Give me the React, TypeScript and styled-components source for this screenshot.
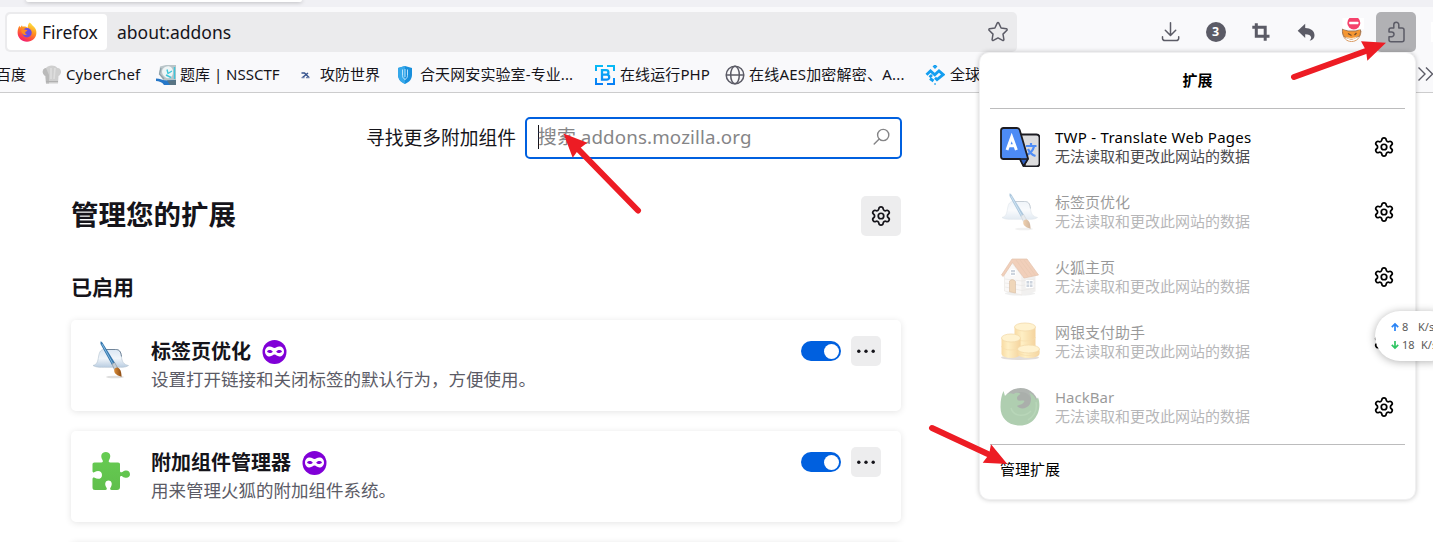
import React from 'react';
import styled, { createGlobalStyle } from 'styled-components';
import { Settings } from 'lucide-react';

const Global = createGlobalStyle`
  * { box-sizing: border-box; }
  body {
    margin: 0;
    overflow: hidden;
    background: #fff;
    color: #15141a;
    font-family: "Noto Sans", "Noto Sans CJK SC", sans-serif;
  }
  h1, h2, h3, p { margin: 0; }
  svg { display: block; flex: none; }
`;

const Window = styled.div`
  position: relative;
  width: 1433px;
  height: 542px;
  overflow: hidden;
  background: #fff;
`;

/* ---------- browser chrome ---------- */

const TabStrip = styled.div`
  height: 7px;
  padding-left: 26px;
  background: #f0f0f4;
`;
const ActiveTab = styled.div`
  width: 276px;
  height: 2px;
  background: #fff;
  border-radius: 0 0 4px 4px;
  box-shadow: 0 0 4px rgba(0, 0, 0, 0.4);
`;
const NavBar = styled.div`
  display: flex;
  height: 46px;
  padding: 5px 0 0 5px;
  background: #f9f9fb;
`;
const UrlBar = styled.div`
  display: flex;
  align-items: center;
  flex: none;
  width: 1012px;
  height: 40px;
  padding: 2px 8px 2px 2px;
  border-radius: 5px;
  background: #ebebed;
`;
const Identity = styled.div`
  display: flex;
  align-items: center;
  gap: 5.5px;
  width: 100px;
  height: 36px;
  padding-left: 9.5px;
  border-radius: 4px;
  background: #fff;
`;
const UrlText = styled.span`
  font-size: 17.5px;
  line-height: 24px;
  white-space: nowrap;
`;
const Address = styled.div`
  flex: 1;
  padding-left: 10px;
  display: flex;
`;
const Tools = styled.div`
  display: flex;
  flex: none;
  gap: 5.2px;
  margin-left: 133px;
`;
const ToolButton = styled.div<{ $active?: boolean }>`
  display: flex;
  align-items: center;
  justify-content: center;
  flex: none;
  width: 40px;
  height: 40px;
  padding-left: 1px;
  border-radius: 5px;
  background: ${(p) => (p.$active ? '#b1b1b4' : 'transparent')};
`;
const EdgeStub = styled.div`
  width: 3px;
  height: 20px;
  margin: 10px 0 0 15px;
  background: #fff;
`;
const BookmarksBar = styled.div`
  display: flex;
  align-items: center;
  height: 40px;
  background: #f9f9fb;
  border-bottom: 1px solid #cccccd;
`;
const Bookmark = styled.div<{ $width: number; $gap?: number; $track?: number }>`
  display: flex;
  align-items: center;
  flex: none;
  gap: ${(p) => p.$gap ?? 5}px;
  width: ${(p) => p.$width}px;
  height: 22px;
  padding-top: 2px;
  font-size: 15px;
  line-height: 22px;
  white-space: nowrap;
  letter-spacing: ${(p) => p.$track ?? 0}px;
  svg { margin-top: 2px; }
`;
const FirstBookmark = styled(Bookmark)`
  margin-left: -4px;
`;

/* ---------- add-ons page ---------- */

const Main = styled.main`
  width: 831px;
  margin-left: 71px;
  padding-top: 24px;
`;
const SearchRow = styled.div`
  display: flex;
  align-items: center;
  justify-content: flex-end;
  height: 42px;
`;
const SearchLabel = styled.span`
  margin-right: 9px;
  font-size: 18.75px;
  line-height: 28px;
`;
const SearchBox = styled.div`
  display: flex;
  align-items: center;
  width: 377px;
  height: 42px;
  padding: 0 10px 0 11px;
  border: 2px solid #0060df;
  border-radius: 5px;
  color: #858587;
  svg { margin-top: -3px; }
`;
const Caret = styled.i`
  width: 1px;
  height: 24px;
  margin-top: -2px;
  background: #15141a;
`;
const Placeholder = styled.span`
  flex: 1;
  margin: -2px 0 0 -1px;
  font-size: 18.75px;
  line-height: 28px;
  letter-spacing: 0.13px;
  white-space: pre;
`;
const HeadingRow = styled.div`
  display: flex;
  justify-content: space-between;
  height: 40px;
  margin: 37px 1px 0 0;
`;
const PageTitle = styled.h1`
  font-size: 27.5px;
  line-height: 37px;
  font-weight: 700;
`;
const SquareButton = styled.div<{ $size: number }>`
  display: flex;
  align-items: center;
  justify-content: center;
  flex: none;
  width: ${(p) => p.$size}px;
  height: ${(p) => p.$size}px;
  border-radius: 5px;
  background: #ededee;
`;
const SectionTitle = styled.h2`
  margin-top: 35px;
  font-size: 21px;
  line-height: 32px;
  font-weight: 700;
`;
const CardList = styled.div`
  display: flex;
  flex-direction: column;
  gap: 20px;
  width: 830px;
  margin-top: 17px;
`;
const Card = styled.article`
  display: flex;
  height: 91px;
  padding: 16px 20px 0;
  border-radius: 5px;
  background: #fff;
  box-shadow: 0 1px 7px rgba(12, 12, 13, 0.11);
`;
const CardIcon = styled.div`
  width: 60px;
  padding-top: 4px;
`;
const CardBody = styled.div`
  flex: 1;
`;
const CardTitle = styled.h3`
  display: flex;
  align-items: center;
  gap: 11px;
  height: 31px;
  padding-top: 1px;
  font-size: 20px;
  line-height: 30px;
  font-weight: 700;
  svg { margin-top: -1px; }
`;
const CardText = styled.p`
  margin-top: -1.5px;
  font-size: 17.5px;
  line-height: 26px;
  color: #5b5b66;
  white-space: nowrap;
`;
const CardActions = styled.div`
  display: flex;
  align-items: center;
  gap: 10px;
  height: 30px;
`;
const Toggle = styled.div`
  display: flex;
  justify-content: flex-end;
  width: 40px;
  height: 20px;
  padding: 2.5px 2px;
  border-radius: 10px;
  background: #0060df;
  &::after {
    content: '';
    width: 15px;
    height: 15px;
    border-radius: 50%;
    background: #fff;
  }
`;

/* ---------- extensions popup ---------- */

const Popup = styled.section`
  position: absolute;
  left: 979px;
  top: 52px;
  width: 437px;
  height: 448px;
  padding: 0 10px;
  border: 1px solid #f0f0f1;
  border-radius: 10px;
  background: #fff;
  color: #000;
  box-shadow: 0 0 5px rgba(0, 0, 0, 0.22);
`;
const PopupTitle = styled.h2`
  height: 56px;
  padding-bottom: 1px;
  border-bottom: 1px solid #bcbcbd;
  font-size: 15px;
  line-height: 55px;
  font-weight: 700;
  text-align: center;
`;
const PopupList = styled.div`
  height: 336px;
  padding: 5.5px 10px 0 10px;
  border-bottom: 1px solid #bcbcbd;
`;
const PopupRow = styled.div`
  display: flex;
  align-items: center;
  height: 65px;
`;
const RowInfo = styled.div<{ $off?: boolean }>`
  display: flex;
  align-items: center;
  flex: 1;
  gap: 15px;
  opacity: ${(p) => (p.$off ? 0.4 : 1)};
`;
const RowText = styled.div`
  font-size: 15px;
  line-height: 19px;
  white-space: nowrap;
`;
const RowName = styled.div<{ $track?: number }>`
  letter-spacing: ${(p) => p.$track ?? 0}px;
`;
const RowNote = styled.div`
  color: #4c4c50;
`;
const PopupFooter = styled.div`
  padding-left: 10px;
  font-size: 15px;
  line-height: 48px;
`;

/* ---------- floating widgets ---------- */

const SpeedPill = styled.aside`
  position: absolute;
  left: 1375px;
  top: 311px;
  width: 80px;
  height: 50px;
  padding: 7px 0 0 16px;
  border-radius: 25px;
  background: #fff;
  box-shadow: 0 1px 8px rgba(0, 0, 0, 0.3);
`;
const SpeedLine = styled.div`
  display: flex;
  align-items: center;
  height: 18px;
  font-size: 11px;
  line-height: 18px;
  color: #5a5a5a;
  white-space: nowrap;
`;
const SpeedValue = styled.span<{ $width: number }>`
  width: ${(p) => p.$width}px;
  margin-left: 3px;
`;
const Annotations = styled.svg`
  position: absolute;
  left: 0;
  top: 0;
  pointer-events: none;
`;

/* ---------- icons ---------- */

const ink = '#5b5b66';

const FirefoxIcon = () => (
  <svg width="20" height="20" viewBox="0 0 20 20">
    <defs>
      <linearGradient id="ff" x1="0.8" y1="0" x2="0.3" y2="1">
        <stop offset="0" stopColor="#fff04a" />
        <stop offset="0.4" stopColor="#ff9a1f" />
        <stop offset="0.75" stopColor="#ff4a3f" />
        <stop offset="1" stopColor="#f0187a" />
      </linearGradient>
    </defs>
    <path d="M12.6.4c2 1.2 2.5 2.7 3.8 3.9C18.6 6.200 19.500 8 19.400 11c-.2 5-4.200 8.700-9.400 8.700S.6 15.800.6 10.700C.6 8 1.200 5.600 2.500 3.700l.7 1.700 1.800-2.200.5 1.500c2.100-.5 4 .1 5.200 1C10.900 3.600 11.200 1.700 12.600.4z" fill="url(#ff)" />
    <circle cx="10" cy="10.700" r="4.700" fill="#6b4be0" />
    <path d="M4.400 8.300c1.200-1.300 2.900-1.200 4.200-.5l1.900.4c-.2 1-1.300 1.200-2.100 1.700-.7.900.1 2.300 1.600 2.300-1 1.100-3.300 1-4.300-.3-1-1.200-1.500-2.400-1.300-3.600z" fill="#ff8a22" />
  </svg>
);
const StarIcon = () => (
  <svg width="22" height="22" viewBox="0 0 22 22" fill="none" stroke={ink} strokeWidth="1.500" strokeLinejoin="round">
    <path d="M10.200 2.100a.9.900 0 0 1 1.600 0l2.300 4.900 5.300.8a.9.900 0 0 1 .5 1.500l-3.900 3.800.9 5.400a.9.900 0 0 1-1.300.9L11 16.900l-4.600 2.500a.9.900 0 0 1-1.300-.9L6 13.100 2.100 9.300a.9.900 0 0 1 .5-1.500L7.900 7z" />
  </svg>
);
const DownloadIcon = () => (
  <svg width="20" height="20" viewBox="0 0 20 20" fill="none" stroke={ink} strokeWidth="1.500" strokeLinecap="round" strokeLinejoin="round">
    <path d="M9.500 .8v12.500M4.300 8.300l5.200 5.200 5.200-5.200M1.500 14.800v1.500a2.200 2.200 0 0 0 2.200 2.200h11.800a2.200 2.200 0 0 0 2.200-2.200v-1.500" />
  </svg>
);
const CountBadge = styled.span`
  width: 20px;
  height: 20px;
  border-radius: 50%;
  background: #5b5b66;
  color: #fff;
  font: 700 12.500px/20px "Open Sans", sans-serif;
  text-align: center;
`;
const CropIcon = () => (
  <svg width="20" height="20" viewBox="0 0 20 20" fill="none" stroke={ink} strokeWidth="3">
    <path d="M5.300 1.200v13H18.500M1.300 5.300H14.200V18.800" />
  </svg>
);
const UndoIcon = () => (
  <svg width="20" height="20" viewBox="0 0 20 20">
    <path d="M9.200 1.700v4.300c5.500.1 9.300 3 9.300 7.200 0 2.700-1.500 4.800-4.900 5.600.9-1.200 1.700-2.300 1.500-3.600-.3-2-2.500-3-5.900-3v3.800L1.700 8.800z" fill={ink} />
  </svg>
);
const FoxBlockedIcon = () => (
  <svg width="26" height="28" viewBox="-1 0 26 28">
    <path d="M3.500 14C4 20 7.500 23.500 12.500 23.500S21.500 20 22 13z" fill="#fff" stroke="#d99a62" strokeWidth="1" />
    <path d="M3.500 11 9 13h8l4.500-2c.3 3-.3 5-1 7L12.500 21.500 5.500 19c-1.500-2-2.500-5-2-8z" fill="#f59631" stroke="#8d6b53" strokeWidth="0.800" />
    <path d="M9 15.500l3.500 2M17.500 15l-2 2" stroke="#6d4a2e" strokeWidth="1.200" fill="none" />
    <path d="M6 19q6.500 5 13-.5l-6.500 1.500z" fill="#ffe2c0" />
    <rect x="3.500" y="-1.500" width="22" height="13" rx="2" fill="#fff" />
    <circle cx="14.800" cy="4.900" r="6.500" fill="#f5426c" />
    <rect x="10.200" y="3.700" width="9.200" height="2.500" rx="0.600" fill="#fff" />
  </svg>
);
const PuzzleOutline = () => (
  <svg width="20" height="22" viewBox="0 0 20 22" fill="none" stroke={ink} strokeWidth="1.500" strokeLinejoin="round">
    <path d="M7.800 7V3.700a2.500 2.500 0 0 1 5 0V7H16a2 2 0 0 1 2 2v9.700a2 2 0 0 1-2 2H5a2 2 0 0 1-2-2v-3h2.600a2.400 2.400 0 0 0 0-4.800H3V9a2 2 0 0 1 2-2z" />
  </svg>
);
const ChefHat = () => (
  <svg width="20" height="20" viewBox="0 0 20 20">
    <path d="M4 18.500 3.500 11C-.5 9 0 3.500 4 3 6-.2 13-.4 15.500 3c4.300.2 4.800 6 1 8L16 18.500z" fill="#cfcfcf" />
    <path d="M4 18.500 3.500 11C-.5 9 0 3.500 4 3l3 7v8.500z" fill="#bababa" />
    <path d="M9 3v11M13 3l-1 11" stroke="#dedede" strokeWidth="1.600" />
    <path d="M4 16.500h12" stroke="#b0b0b0" />
  </svg>
);
const NssIcon = () => (
  <svg width="20" height="20" viewBox="0 0 20 20">
    <path d="M4 1.500 10 0h10v16H8L3 9z" fill="#b9c5c9" />
    <path d="M9 2c4-2 8 0 8 5s-4 8-8 5-4-8 0-10z" fill="#eef5f6" />
    <path d="M11 4.500l1 4 4-2.500M10 10l5 2.500M18.500 2v12" stroke="#3fc6da" strokeWidth="1.400" fill="none" />
    <path d="M5 3 3.500 9 8 14" stroke="#8fa2aa" strokeWidth="1.300" fill="none" />
    <path d="M0 13.500c4 0 7 2 11 2l9-.5v5H8c-2-3-5-4-8-4z" fill="#2677c8" />
    <path d="M11 15.500l9-.5v5h-6z" fill="#587483" />
  </svg>
);
const XctfIcon = () => (
  <svg width="20" height="20" viewBox="0 0 20 20" fill="none">
    <path d="M6.500 8h3l4.500 4.500M13 8 7.500 12.500" stroke="#38558f" strokeWidth="1.500" />
    <path d="M11 12.700h3.500M6.500 12.700h3" stroke="#7083ad" strokeWidth="1.200" />
  </svg>
);
const ShieldIcon = () => (
  <svg width="20" height="20" viewBox="0 0 20 20">
    <path d="M10 1 17 3v7c0 4.500-3.500 7.500-7 9-3.500-1.500-7-4.500-7-9V3z" fill="#188fdc" />
    <path d="M10 1v18c-3.500-1.500-7-4.500-7-9V3z" fill="#35a8ea" />
    <path d="M7.500 4.500v6c0 1.700.8 3 2.500 4 1.700-1 2.500-2.300 2.500-4v-6M10 4v8" stroke="#c9ebff" strokeWidth="0.900" fill="none" />
  </svg>
);
const RunIcon = () => (
  <svg width="20" height="20" viewBox="0 0 20 20" fill="none">
    <defs>
      <linearGradient id="run" x1="0" y1="0" x2="0" y2="20" gradientUnits="userSpaceOnUse">
        <stop stopColor="#08bdf5" />
        <stop offset="1" stopColor="#087cf5" />
      </linearGradient>
    </defs>
    <path d="M8 1H1v5M12 1h7v5M1 13v6h7M19 13v6h-7" stroke="url(#run)" strokeWidth="2" />
    <path d="M7 5.200h4.200a2.200 2.200 0 0 1 0 4.500H7zM7 9.700h4.700a2.500 2.500 0 0 1 0 5H7z" stroke="url(#run)" strokeWidth="2.300" />
  </svg>
);
const GlobeIcon = () => (
  <svg width="20" height="20" viewBox="0 0 20 20" fill="none" stroke={ink} strokeWidth="1.500">
    <circle cx="10" cy="10" r="8.800" />
    <ellipse cx="10" cy="10" rx="4.300" ry="8.800" />
    <path d="M1.300 10h17.400" />
  </svg>
);
const DiamondIcon = () => (
  <svg width="20" height="20" viewBox="0 0 20 20" fill="none" stroke="#139ef0" strokeWidth="2.800">
    <path d="M1.500 9.800 5.500 6l4.300 3.800 3.700-3.500M13 5l5.200 4.600-6.200 5-2-1.800" />
    <path d="M4.500 12.200 7 10M5 13.500l3.500 2.500" />
    <path d="M8.600 1.600 10 .2l1.400 1.400L10 3zM9.300 19h1.500" strokeWidth="1.500" />
  </svg>
);
const OverflowIcon = () => (
  <svg width="16" height="16" viewBox="0 0 16 16" fill="none" stroke={ink} strokeWidth="1.400">
    <path d="M.5 2.500l6.500 6.500L.5 15.500M8 2.500l6.500 6.500L8 15.500" />
  </svg>
);
const SearchIcon = () => (
  <svg width="17" height="17" viewBox="0 0 17 17" fill="none" stroke="#858587" strokeWidth="1.400" strokeLinecap="round">
    <circle cx="10.200" cy="7" r="5.600" />
    <path d="M6.200 11 1.200 16" />
  </svg>
);
const BrushIcon = () => (
  <svg width="40" height="40" viewBox="0 0 40 40">
    <defs>
      <linearGradient id="hat" x1="0" y1="0" x2="0" y2="1">
        <stop offset="0" stopColor="#dbe7f3" />
        <stop offset="0.500" stopColor="#f0f5fa" />
        <stop offset="1" stopColor="#b9cde1" />
      </linearGradient>
      <linearGradient id="tip" x1="0" y1="0" x2="1" y2="0">
        <stop stopColor="#d98b36" />
        <stop offset="1" stopColor="#8b4a12" />
      </linearGradient>
    </defs>
    <ellipse cx="24" cy="37" rx="9" ry="1.300" fill="#dedede" />
    <path d="M2 25.500c4-1 4.800-4 5.500-8.500 1-6 2.500-7.500 6-7.500h11c3.500 0 5.300 1.500 6 7.500.5 4.500 2 7.500 7 8.500-3 2.200-7 1.800-11 1.800h-13c-4 0-8 .4-11.500-1.800z" fill="url(#hat)" stroke="#b4c2d0" strokeWidth="0.600" />
    <path d="M14.500 9.500h10c3.500 0 5.300 1.500 6 7" fill="none" stroke="#657b91" strokeWidth="0.900" />
    <path d="M9.500 1.500c1-.3 1.700.5 2.500 2L24 23l-3 2L9.500 4z" fill="#3577ae" />
    <path d="M11 4 22 24" stroke="#8cbfe3" strokeWidth="0.900" />
    <path d="m21 24 2.600-1.600 3 5.500-3.300 1.600z" fill="#c3cdd5" stroke="#71818f" strokeWidth="0.500" />
    <path d="M23.200 30c.5-2.600 3.300-3.400 5.200-1.300 2 2.300 1.900 5 2.200 8-4-.8-7.800-3.200-7.400-6.700z" fill="url(#tip)" />
  </svg>
);
const GreenPuzzle = () => (
  <svg width="40" height="40" viewBox="0 0 40 40">
    <defs>
      <linearGradient id="puz" x1="0" y1="0" x2="0" y2="1">
        <stop stopColor="#66cc52" />
        <stop offset="1" stopColor="#60bf4c" />
      </linearGradient>
    </defs>
    <path d="M3.500 11.500h6.800c1.600 0 2-1.200 1.200-2.500C9 5 10.500 1 14.800 1s5.800 4 3.300 8c-.8 1.300-.4 2.500 1.200 2.500H27c1.500 0 2 .7 2 2v6.200c0 1.700 1.200 2 2.400 1.200 4-2.800 7.600-1 7.600 2.300s-3.600 5-7.600 2.200c-1.200-.8-2.400-.5-2.400 1.200V36c0 2-1 3-3 3h-5.300c-1.500 0-2-1.200-1.200-2.300 2.500-3.700 1-7.200-2-7.200s-4.500 3.500-2 7.200c.8 1.100.3 2.300-1.200 2.300H4c-1.700 0-2.500-.8-2.500-2.500V28c0-1.500 1-2 2.200-1.200 3.500 2.300 7.300.7 7.300-2.900s-3.800-5-7.300-2.800c-1.200.8-2.200.3-2.200-1.100v-6.500c0-1.300.7-2 2-2z" fill="url(#puz)" />
  </svg>
);
const MaskBadge = () => (
  <svg width="25" height="24" viewBox="0 0 25 24">
    <circle cx="12.500" cy="12" r="12" fill="#8000d7" />
    <path d="M7.800 6.500c2.300 0 3.300 1.500 4.700 1.500s2.400-1.500 4.700-1.500c3 0 4.800 2.100 4.800 5s-2 5-4.600 5c-2.400 0-3.300-1.900-4.900-1.900s-2.500 1.900-4.900 1.900C5 16.500 3 14.400 3 11.500s1.800-5 4.800-5z" fill="#fff" />
    <path d="M5 11.500c1.300-1.900 4.600-1.900 5.800.2-1.300 1.800-4.600 1.700-5.800-.2zM20 11.500c-1.300-1.900-4.600-1.900-5.800.2 1.300 1.800 4.600 1.700 5.800-.2z" fill="#8000d7" />
  </svg>
);
const MoreIcon = () => (
  <svg width="20" height="4" viewBox="0 0 20 4" fill="#15141a">
    <circle cx="2.800" cy="2.300" r="1.700" />
    <circle cx="10" cy="2.300" r="1.700" />
    <circle cx="17.200" cy="2.300" r="1.700" />
  </svg>
);
const TranslateIcon = () => (
  <svg width="40" height="40" viewBox="0 0 40 40">
    <path d="M18 7.500h18.500q3 0 3 3v26q0 3-3 3H25z" fill="#dcdcde" stroke="#1c1c22" strokeWidth="1.800" />
    <path d="M26 19h10.500M31 16v3M34 19.500c-1 4-4 7-8 9M28 22c1.500 3.500 4 6 7.500 7" fill="none" stroke="#4f8df7" strokeWidth="2.200" />
    <path d="M3.500 1H17q2 0 2.700 2L28 31.500 23.500 39 20 32H3.500Q1 32 1 29.500v-26Q1 1 3.500 1z" fill="#4d8bf5" stroke="#1c1c22" strokeWidth="1.800" strokeLinejoin="round" />
    <path d="M20 32h8l-4.500 7z" fill="#2f5fbe" stroke="#1c1c22" strokeWidth="1.500" strokeLinejoin="round" />
    <path d="m7 23 4.700-13 4.700 13M8.500 18.800h6.500" fill="none" stroke="#fff" strokeWidth="2.900" />
  </svg>
);
const HouseIcon = () => (
  <svg width="40" height="40" viewBox="0 0 40 40">
    <ellipse cx="20" cy="36.500" rx="15" ry="2" fill="#d8d8d8" />
    <path d="M4.500 18 12 6l10 13v19L4.500 34z" fill="#f4f0ed" stroke="#c7bdb4" strokeWidth="0.600" />
    <path d="M22 20 35.500 17v17.500L22 38z" fill="#dedbd8" />
    <path d="M5 22 22 24l13-2M5 26l17 2.500L35 26M5 30l17 3.500L35 31" fill="none" stroke="#c9c3be" strokeWidth="0.700" />
    <path d="M12 2h15L38.500 18l-14.500 3L12.500 5.500 3.200 19.500 1.500 18z" fill="#dd8a54" stroke="#bd6a35" strokeWidth="0.700" />
    <path d="M16 3l12 16.500M20 3l12 15.800M24 3l11.500 15.500" stroke="#c77742" strokeWidth="0.700" />
    <path d="M9.500 24q3-3 6 .5V36l-6-1.300z" fill="#d89a52" stroke="#a8682d" strokeWidth="0.700" />
    <path d="M10.500 12.500h5v6h-5zM26 23.500h7v7h-7z" fill="#8496ad" stroke="#fff" />
    <path d="M10.500 15.500h5M29.500 23.500v7M26 27h7" stroke="#fff" strokeWidth="0.800" />
  </svg>
);
const CoinStack = ({ x, y, rx, h }: { x: number; y: number; rx: number; h: number }) => (
  <g>
    <path d={`M${x - rx} ${y}v${h}a${rx} 4 0 0 0 ${rx * 2} 0v${-h}z`} fill="url(#gold)" />
    <path d={`M${x - rx} ${y + h * 0.5}a${rx} 4 0 0 0 ${rx * 2} 0`} fill="none" stroke="#e9ac35" strokeWidth="0.700" />
    <ellipse cx={x} cy={y} rx={rx} ry="4" fill="#ffe18a" stroke="#e3a52f" strokeWidth="0.800" />
  </g>
);
const CoinsIcon = () => (
  <svg width="40" height="40" viewBox="0 0 40 40">
    <defs>
      <linearGradient id="gold" x1="0" y1="0" x2="1" y2="0">
        <stop stopColor="#f0a51c" />
        <stop offset="0.350" stopColor="#ffd96e" />
        <stop offset="1" stopColor="#e6940f" />
      </linearGradient>
    </defs>
    <ellipse cx="20" cy="35.500" rx="19" ry="2.500" fill="#b8aca2" />
    <CoinStack x={25} y={5} rx={10.5} h={20} />
    <CoinStack x={11} y={16} rx={9.5} h={16} />
    <CoinStack x={28.5} y={27} rx={11} h={5} />
  </svg>
);
const HackBarIcon = () => (
  <svg width="40" height="40" viewBox="0 0 40 40">
    <circle cx="20.500" cy="19" r="18" fill="#3c483f" />
    <circle cx="21" cy="16" r="11" fill="#2c3a30" />
    <path d="M3.500 4l1.500 5c2.500-3 5.500-3.500 8.500-2 2.500-2 6-1.500 7 0-3.500 2-4.500 4-2.500 6.500 3 .5 5-.5 6.500.5-1.500 4-5.500 3.500-7.500 5 3 4 10 3 13-2 1.500-4 1.500-8-1-11.500 4 1.500 6 4.500 7 7.500l2-2.500c4.500 11-2 28-18 28C8 38.500.5 31 .5 20 .5 13 1.500 8 3.500 4z" fill="#3a863d" />
    <path d="M11 21c2 8 13 10 20 3M36 15c1.500 8-1.500 14-8 18" fill="none" stroke="#4f9a50" strokeWidth="1.500" />
  </svg>
);
const SpeedArrow = ({ color, down }: { color: string; down?: boolean }) => (
  <svg width="8" height="10" viewBox="0 0 8 10" fill="none" stroke={color} strokeWidth="1.700">
    <path d={down ? 'M4 1v7M.8 4.800 4 8l3.200-3.200' : 'M4 9V2M.8 5.200 4 2l3.200 3.200'} />
  </svg>
);

const addons = [
  { name: '标签页优化', text: '设置打开链接和关闭标签的默认行为，方便使用。', icon: <BrushIcon /> },
  { name: '附加组件管理器', text: '用来管理火狐的附加组件系统。', icon: <GreenPuzzle /> },
  { name: '', text: '', icon: null },
];

const installed = [
  { name: 'TWP - Translate Web Pages', icon: <TranslateIcon />, off: false, track: 0.26 },
  { name: '标签页优化', icon: <BrushIcon />, off: true },
  { name: '火狐主页', icon: <HouseIcon />, off: true },
  { name: '网银支付助手', icon: <CoinsIcon />, off: true },
  { name: 'HackBar', icon: <HackBarIcon />, off: true },
];

export default function App() {
  return (
    <Window>
      <Global />
      <TabStrip><ActiveTab /></TabStrip>
      <NavBar>
        <UrlBar>
          <Identity>
            <FirefoxIcon />
            <UrlText>Firefox</UrlText>
          </Identity>
          <Address><UrlText>about:addons</UrlText></Address>
          <StarIcon />
        </UrlBar>
        <Tools>
          <ToolButton><DownloadIcon /></ToolButton>
          <ToolButton><CountBadge>3</CountBadge></ToolButton>
          <ToolButton><CropIcon /></ToolButton>
          <ToolButton><UndoIcon /></ToolButton>
          <ToolButton><FoxBlockedIcon /></ToolButton>
          <ToolButton $active><PuzzleOutline /></ToolButton>
        </Tools>
        <EdgeStub />
      </NavBar>
      <BookmarksBar>
        <FirstBookmark $width={46}>百度</FirstBookmark>
        <Bookmark $width={114} $gap={4} $track={0.1}><ChefHat />CyberChef</Bookmark>
        <Bookmark $width={139} $gap={4}><NssIcon />题库 | NSSCTF</Bookmark>
        <Bookmark $width={100}><XctfIcon />攻防世界</Bookmark>
        <Bookmark $width={200} $track={0.1}><ShieldIcon />合天网安实验室-专业...</Bookmark>
        <Bookmark $width={130} $track={0.1}><RunIcon />在线运行PHP</Bookmark>
        <Bookmark $width={200} $gap={4} $track={0.2}><GlobeIcon />在线AES加密解密、A...</Bookmark>
        <Bookmark $width={493}><DiamondIcon />全球</Bookmark>
        <OverflowIcon />
      </BookmarksBar>

      <Main>
        <SearchRow>
          <SearchLabel>寻找更多附加组件</SearchLabel>
          <SearchBox>
            <Caret />
            <Placeholder>搜索 addons.mozilla.org</Placeholder>
            <SearchIcon />
          </SearchBox>
        </SearchRow>
        <HeadingRow>
          <PageTitle>管理您的扩展</PageTitle>
          <SquareButton $size={40}><Settings size={22} strokeWidth={1.9} /></SquareButton>
        </HeadingRow>
        <SectionTitle>已启用</SectionTitle>
        <CardList>
          {addons.map((a, i) => (
            <Card key={i}>
              {a.name && (
                <>
                  <CardIcon>{a.icon}</CardIcon>
                  <CardBody>
                    <CardTitle>{a.name}<MaskBadge /></CardTitle>
                    <CardText>{a.text}</CardText>
                  </CardBody>
                  <CardActions>
                    <Toggle />
                    <SquareButton $size={30}><MoreIcon /></SquareButton>
                  </CardActions>
                </>
              )}
            </Card>
          ))}
        </CardList>
      </Main>

      <Popup>
        <PopupTitle>扩展</PopupTitle>
        <PopupList>
          {installed.map((e) => (
            <PopupRow key={e.name}>
              <RowInfo $off={e.off}>
                {e.icon}
                <RowText>
                  <RowName $track={e.track}>{e.name}</RowName>
                  <RowNote>无法读取和更改此网站的数据</RowNote>
                </RowText>
              </RowInfo>
              <Settings size={22} strokeWidth={1.9} color="#000" />
            </PopupRow>
          ))}
        </PopupList>
        <PopupFooter>管理扩展</PopupFooter>
      </Popup>

      <SpeedPill>
        <SpeedLine><SpeedArrow color="#2a84f5" /><SpeedValue $width={16}>8</SpeedValue>K/s</SpeedLine>
        <SpeedLine><SpeedArrow color="#2fc562" down /><SpeedValue $width={19}>18</SpeedValue>K/s</SpeedLine>
      </SpeedPill>

      <Annotations width="1433" height="542" viewBox="0 0 1433 542" fill="#ed1c24" stroke="#ed1c24">
        <path d="M1294 77 1370 49.500M638 210.500 577 148M932 428 990 455" strokeWidth="6" strokeLinecap="round" />
        <path d="M1386 42.700 1361 41.300 1366 50.500 1367.300 60.700zM563.500 133.500 587.300 142.700 579 149 572.700 157.700zM1007.300 464 991 444.300 989 454.500 982.700 462.700z" stroke="none" />
      </Annotations>
    </Window>
  );
}
